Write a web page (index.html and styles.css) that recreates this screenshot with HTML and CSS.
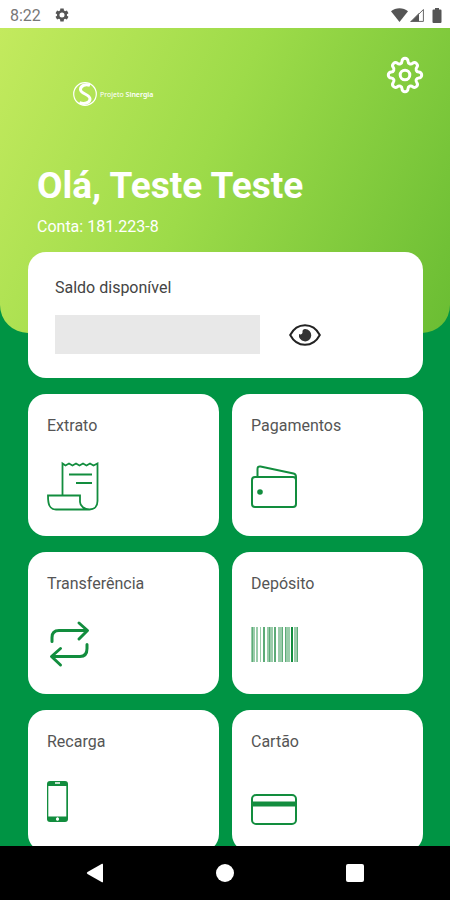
FILE: index.html
```html
<!DOCTYPE html>
<html lang="pt-br">
<head>
  <meta charset="UTF-8">
  <meta name="viewport" content="width=device-width, initial-scale=1.0">
  <title>Projeto Sinergia</title>
  <link rel="stylesheet" href="styles.css">
</head>
<body>
  <div class="status-bar">
    <span class="clock">8:22</span>
    <svg width="16" height="16" viewBox="0 0 24 24" fill="#555"><path fill-rule="evenodd" d="M19.4 13a7.5 7.5 0 0 0 0-2l2.300-1.800-2.300-4-2.800 1.100a7.500 7.500 0 0 0-1.700-1L14.500 2.300h-5l-.4 3a7.500 7.500 0 0 0-1.700 1L4.600 5.200l-2.300 4L4.600 11a7.500 7.500 0 0 0 0 2l-2.300 1.800 2.300 4 2.800-1.100a7.500 7.500 0 0 0 1.700 1l.4 3h5l.4-3a7.500 7.500 0 0 0 1.700-1l2.800 1.100 2.300-4zM12 15.800a3.800 3.800 0 1 1 0-7.600 3.800 3.800 0 0 1 0 7.600z"/></svg>
    <div class="signals">
      <svg width="17" height="14" viewBox="0 0 17 14" fill="#555"><path d="M0 3.200C4.500-.8 12.500-.8 17 3.200L8.500 14z"/></svg>
      <svg width="14" height="14" viewBox="0 0 14 14"><path d="M0 14L9 5v9z" fill="#555"/><path d="M1.500 13.400L13.400 1.500v11.900z" fill="none" stroke="#666"/></svg>
      <svg class="battery" width="10" height="15" viewBox="0 0 10 15" fill="#555"><path d="M3 0h4v1.500h1.500q1 0 1 1V14q0 1-1 1h-7q-1 0-1-1V2.500q0-1 1-1H3z"/></svg>
    </div>
  </div>

  <main>
    <header class="hero">
      <div class="top">
        <div class="logo">
          <svg width="26" height="26" viewBox="0 0 26 26" fill="none" stroke="#fff">
            <circle cx="13" cy="13" r="11.300" stroke-width="1.200"/>
            <path d="M18 4.500C14 2.500 8.500 4.500 8.500 8.500c0 4.500 9.500 4.500 9.500 9.500 0 4-6 5.500-10.500 3.500" stroke-width="3"/>
          </svg>
          <span class="brand">Projeto <b>Sinergia</b></span>
        </div>
        <button class="settings" aria-label="Configurações">
          <svg width="38" height="38" viewBox="-19 -19 38 38" fill="none" stroke="#fff" stroke-width="3" stroke-linejoin="round">
            <path d="M-3-13.700A3 3 0 0 1 3-13.700A2.700 2.700 0 0 0 7.600-11.800A3 3 0 0 1 11.800-7.600A2.700 2.700 0 0 0 13.700-3A3 3 0 0 1 13.700 3A2.700 2.700 0 0 0 11.800 7.600A3 3 0 0 1 7.600 11.800A2.700 2.700 0 0 0 3 13.700A3 3 0 0 1-3 13.700A2.700 2.700 0 0 0-7.600 11.800A3 3 0 0 1-11.800 7.600A2.700 2.700 0 0 0-13.700 3A3 3 0 0 1-13.700-3A2.700 2.700 0 0 0-11.800-7.600A3 3 0 0 1-7.600-11.800A2.700 2.700 0 0 0-3-13.700z"/>
            <circle r="4.800"/>
          </svg>
        </button>
      </div>
      <h1>Olá, Teste Teste</h1>
      <p class="account">Conta: 181.223-8</p>
    </header>

    <section class="balance">
      <h2>Saldo disponível</h2>
      <div class="balance-row">
        <div class="balance-hidden"></div>
        <button class="eye" aria-label="Mostrar saldo">
          <svg width="32" height="22" viewBox="0 0 32 22">
            <path d="M1.200 11C8-2 24-2 30.800 11 24 24 8 24 1.200 11z" fill="none" stroke="#222" stroke-width="2"/>
            <path d="M16 5a6.200 6.200 0 1 1-6 5c1.500 1 4 0 3.500-2.500C13.500 6 14.500 5 16 5z" fill="#333"/>
          </svg>
        </button>
      </div>
    </section>

    <nav class="cards">
      <a class="card" href="#extrato">
        <span>Extrato</span>
        <svg width="54" height="50" viewBox="0 0 54 50" fill="none" stroke="#128d3e" stroke-width="1.800">
          <path d="M15.500 34V2.500l3 2 3.500-2 3.500 2 3.500-2 3.500 2 3.500-2 3.500 2 3.500-2 3.500 2 4-2V40c0 5-3 8.500-8 8.500S33 45 33 41v-6.500H1c0 8 1 14 8 14h34"/>
          <path d="M22 13.500h23M29 22h16"/>
        </svg>
      </a>
      <a class="card" href="#pagamentos">
        <span>Pagamentos</span>
        <svg width="54" height="50" viewBox="0 0 54 50" fill="none" stroke="#128d3e" stroke-width="2">
          <rect x="1" y="16" width="44" height="30" rx="3"/>
          <path d="M6.500 16V8q0-3 3-2.500l33 7q2.500.5 2.500 3.500v3"/>
          <circle cx="9" cy="31" r="2.800" fill="#128d3e" stroke="none"/>
        </svg>
      </a>
      <a class="card" href="#transferencia">
        <span>Transferência</span>
        <svg width="54" height="50" viewBox="0 0 54 50" fill="none" stroke="#128d3e" stroke-width="3" stroke-linecap="round" stroke-linejoin="round">
          <path d="M5 22.500v-4q0-7 7-7h28M32 4l8.500 7.500L32 20"/>
          <path d="M40 25.500v4q0 8-7 8H5M13.500 29.500L4.500 37.500l9 8.500"/>
        </svg>
      </a>
      <a class="card" href="#deposito">
        <span>Depósito</span>
        <svg width="54" height="50" viewBox="0 0 54 50">
          <g fill="#9accaa"><path d="M0 8h3v35H0zM3 8h1v35H3zM5 8h2v35H5zM9 8h1v35H9zM16 8h6v35h-6zM27 8h4v35h-4zM34 8h5v35h-5zM43 8h4v35h-4z"/></g>
          <g fill="#5dab78"><path d="M1 8h1v35H1zM12 8h2v35h-2zM18 8h1v35h-1zM23 8h2v35h-2zM31 8h1v35h-1zM34 8h1v35h-1zM46 8h1v35h-1z"/></g>
          <path d="M40 8h2v35h-2z" fill="#128d3e"/>
        </svg>
      </a>
      <a class="card" href="#recarga">
        <span>Recarga</span>
        <svg width="54" height="50" viewBox="0 0 54 50">
          <path d="M3 4h15q3 0 3 3v35q0 3-3 3H3q-3 0-3-3V7q0-3 3-3z" fill="#128d3e"/>
          <path d="M1.300 9h18v30.500h-18z" fill="#fff"/>
          <path d="M8 6h5M10.500 40.500v3" stroke="#fff" stroke-width="1.500"/>
          <circle cx="10.500" cy="42" r="1.600" fill="#fff"/>
        </svg>
      </a>
      <a class="card" href="#cartao">
        <span>Cartão</span>
        <svg width="54" height="50" viewBox="0 0 54 50" fill="none" stroke="#128d3e" stroke-width="2">
          <rect x="1" y="18" width="44" height="29" rx="4"/>
          <path d="M1 27h44" stroke-width="5"/>
        </svg>
      </a>
    </nav>
  </main>

  <div class="nav-bar">
    <button aria-label="Voltar"><svg width="20" height="20" viewBox="0 0 20 20" fill="#fff"><path d="M2.500 9L17 .8q1-.5 1 .7v17q0 1.200-1 .7L2.500 11q-1.500-1 0-2z"/></svg></button>
    <button aria-label="Início"><svg width="20" height="20" viewBox="0 0 20 20" fill="#fff"><circle cx="10" cy="10" r="9"/></svg></button>
    <button aria-label="Recentes"><svg width="20" height="20" viewBox="0 0 20 20" fill="#fff"><rect x="1" y="1" width="18" height="18" rx="2"/></svg></button>
  </div>
</body>
</html>
```

FILE: styles.css
```css
* {
  box-sizing: border-box;
}
body {
  margin: 0;
  height: 100vh;
  display: flex;
  flex-direction: column;
  font-family: Roboto, Arial, sans-serif;
  background: #009444;
}
h1, h2, p {
  margin: 0;
}
button {
  padding: 0;
  border: none;
  background: none;
  cursor: pointer;
}
svg {
  display: block;
}
.status-bar {
  flex: none;
  display: flex;
  align-items: center;
  gap: 13px;
  height: 28px;
  padding: 2px 8px 0 10px;
  background: #fff;
}
.clock {
  font-size: 16px;
  color: #777;
}
.signals {
  display: flex;
  align-items: center;
  gap: 2px;
  margin-left: auto;
}
.battery {
  margin-left: 6px;
}
main {
  flex: 1;
  min-height: 0;
  overflow: hidden;
}
.hero {
  height: 305px;
  padding: 28px 26px 0 37px;
  border-radius: 0 0 28px 28px;
  background: linear-gradient(115deg, #c3ea5e, #9ddb49 45%, #6abd33);
  color: #fff;
}
.top {
  display: flex;
  justify-content: space-between;
  align-items: flex-start;
}
.logo {
  display: flex;
  align-items: center;
  gap: 2px;
  padding: 25px 0 0 35px;
}
.brand {
  font-family: "Noto Sans", sans-serif;
  font-size: 7px;
}
.brand b {
  font-weight: 600;
}
h1 {
  margin-top: 56px;
  font-size: 37px;
  line-height: 46px;
}
.account {
  margin-top: 6px;
  font-size: 16px;
  line-height: 24px;
}
.balance {
  height: 126px;
  margin: -81px 27px 16px 28px;
  padding: 25px 27px;
  border-radius: 18px;
  background: #fff;
}
h2 {
  font-size: 16px;
  font-weight: normal;
  line-height: 22px;
  color: #444;
}
.balance-row {
  display: flex;
  align-items: center;
  gap: 29px;
  margin-top: 16px;
}
.balance-hidden {
  width: 60%;
  height: 39px;
  background: #e8e8e8;
}
.cards {
  display: grid;
  grid-template-columns: 1fr 1fr;
  gap: 16px 13px;
  padding: 0 27px 0 28px;
}
.card {
  display: flex;
  flex-direction: column;
  gap: 24px;
  height: 142px;
  padding: 21px 19px;
  border-radius: 18px;
  background: #fff;
  color: #555;
  font-size: 16px;
  line-height: 22px;
  text-decoration: none;
}
.nav-bar {
  flex: none;
  display: flex;
  justify-content: center;
  align-items: center;
  gap: 110px;
  height: 54px;
  background: #000;
}
```
